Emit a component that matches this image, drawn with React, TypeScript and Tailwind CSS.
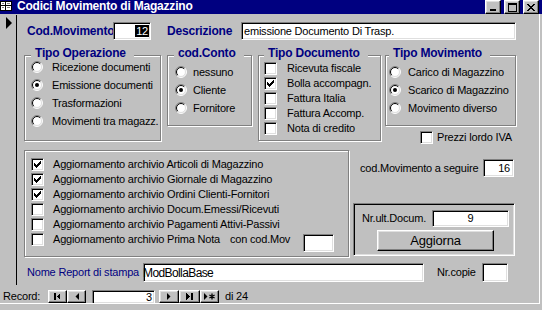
import React from "react";

const SUNKEN =
  "border border-t-[#808080] border-l-[#808080] border-b-white border-r-white shadow-[inset_1px_1px_0_#000,inset_-1px_-1px_0_#dfdfdf]";
const RAISED =
  "border border-t-white border-l-white border-b-black border-r-black shadow-[inset_-1px_-1px_0_#808080,inset_1px_1px_0_#dfdfdf]";
const ETCHED = "border border-[#808080] shadow-[inset_1px_1px_0_#fff,1px_1px_0_#fff]";

function Radio({ on }: { on?: boolean }) {
  return (
    <svg width="12" height="12" viewBox="0 0 12 12" className="shrink-0 block">
      <circle cx="6" cy="6" r="5" fill="#fff" />
      <path d="M2.111 9.889A5.5 5.5 0 0 1 9.889 2.111" fill="none" stroke="#808080" />
      <path d="M9.889 2.111A5.5 5.5 0 0 1 2.111 9.889" fill="none" stroke="#fff" />
      <path d="M2.818 9.182A4.5 4.5 0 0 1 9.182 2.818" fill="none" stroke="#000" />
      <path d="M9.182 2.818A4.5 4.5 0 0 1 2.818 9.182" fill="none" stroke="#dfdfdf" />
      {on && <circle cx="6" cy="6" r="2" fill="#000" />}
    </svg>
  );
}

function Check({ on }: { on?: boolean }) {
  return (
    <div className={`w-[13px] h-[13px] shrink-0 bg-white ${SUNKEN} flex items-center justify-center`}>
      {on && (
        <svg width="7" height="7" viewBox="0 0 7 7" shapeRendering="crispEdges" className="block">
          <path
            d="M0 2h1v3H0zM1 3h1v3H1zM2 4h1v3H2zM3 3h1v3H3zM4 2h1v3H4zM5 1h1v3H5zM6 0h1v3H6z"
            fill="#000"
          />
        </svg>
      )}
    </div>
  );
}

function Legend({ children, className }: { children: React.ReactNode; className: string }) {
  return (
    <div
      className={`-mt-[10px] self-start h-[14px] leading-[14px] pl-[4px] pr-[8px] bg-[#c0c0c0] font-bold text-[12px] text-[#000080] whitespace-nowrap ${className}`}
    >
      {children}
    </div>
  );
}

function TitleBtn({ children, className }: { children: React.ReactNode; className: string }) {
  return (
    <div className={`w-[16px] h-[14px] bg-[#c0c0c0] ${RAISED} flex items-center justify-center ${className}`}>
      {children}
    </div>
  );
}

function NavBtn({ children, className }: { children: React.ReactNode; className: string }) {
  return (
    <div className={`h-[13px] bg-[#c0c0c0] ${RAISED} flex items-center justify-center ${className}`}>
      {children}
    </div>
  );
}

function TitleBar() {
  return (
    <div className="h-[14px] bg-[#000080] flex items-start shrink-0">
      <svg width="12" height="11" viewBox="0 0 12 11" className="block mt-[1px]" shapeRendering="crispEdges">
        <rect x="0" y="0" width="12" height="10" fill="#fff" />
        <path d="M0 0h12v1H0zM0 9h12v1H0zM0 0h1v10H0zM11 0h1v10h-1zM0 4h12v1H0zM5 0h1v10H5z" fill="#000" />
        <path d="M2 2h2v1H2zM7 2h3v1H7zM2 6h2v1H2zM7 6h3v1H7z" fill="#808080" />
      </svg>
      <div className="ml-[5px] -mt-[1px] text-white font-bold text-[12px] leading-[14px] whitespace-nowrap">
        Codici Movimento di Magazzino
      </div>
      <div className="flex-1" />
      <TitleBtn className="">
        <svg width="8" height="8" viewBox="0 0 8 8" className="block" shapeRendering="crispEdges">
          <rect x="1" y="6" width="6" height="2" fill="#000" />
        </svg>
      </TitleBtn>
      <TitleBtn className="ml-[3px]">
        <svg width="9" height="9" viewBox="0 0 9 9" className="block" shapeRendering="crispEdges">
          <path d="M0 0h9v2H0zM0 0h1v9H0zM8 0h1v9H8zM0 8h9v1H0z" fill="#000" />
        </svg>
      </TitleBtn>
      <TitleBtn className="ml-[3px] mr-[3px]">
        <svg width="8" height="7" viewBox="0 0 8 7" className="block" shapeRendering="crispEdges">
          <path
            d="M0 0h2v1H0zM6 0h2v1H6zM1 1h2v1H1zM5 1h2v1H5zM2 2h4v1H2zM3 3h2v1H3zM2 4h4v1H2zM1 5h2v1H1zM5 5h2v1H5zM0 6h2v1H0zM6 6h2v1H6z"
            fill="#000"
          />
        </svg>
      </TitleBtn>
    </div>
  );
}

function Selector() {
  return (
    <div className="w-[17px] pt-[1px] pb-[3px] shrink-0">
      <div className="h-full border-r border-black pt-[2px] pl-[6px]">
        <div className="w-0 h-0 border-y-[6px] border-y-transparent border-l-[6px] border-l-black" />
      </div>
    </div>
  );
}

function Form() {
  const operazioni: [string, boolean][] = [
    ["Ricezione documenti", false],
    ["Emissione documenti", true],
    ["Trasformazioni", false],
    ["Movimenti tra magazz.", false],
  ];
  const conti: [string, boolean][] = [
    ["nessuno", false],
    ["Cliente", true],
    ["Fornitore", false],
  ];
  const documenti: [string, boolean][] = [
    ["Ricevuta fiscale", false],
    ["Bolla accompagn.", true],
    ["Fattura Italia", false],
    ["Fattura Accomp.", false],
    ["Nota di credito", false],
  ];
  const movimenti: [string, boolean][] = [
    ["Carico di Magazzino", false],
    ["Scarico di Magazzino", true],
    ["Movimento diverso", false],
  ];
  const archivi: [string, boolean][] = [
    ["Aggiornamento archivio Articoli di Magazzino", true],
    ["Aggiornamento archivio Giornale di Magazzino", true],
    ["Aggiornamento archivio Ordini Clienti-Fornitori", true],
    ["Aggiornamento archivio Docum.Emessi/Ricevuti", false],
    ["Aggiornamento archivio Pagamenti Attivi-Passivi", false],
  ];

  return (
    <div className="flex-1 flex flex-col pt-[8px]">
      {/* Row 1 */}
      <div className="flex items-center h-[18px] pl-[10px]">
        <div className="w-[86px] font-bold text-[12px] text-[#000080] whitespace-nowrap">Cod.Movimento</div>
        <div className={`w-[38px] h-[18px] bg-white ${SUNKEN} flex items-center justify-end pr-[1px]`}>
          <span className="bg-black text-white h-[12px] leading-[12px] px-[1px]">12</span>
        </div>
        <div className="ml-[16px] w-[74px] font-bold text-[12px] text-[#000080] whitespace-nowrap">Descrizione</div>
        <div className={`w-[275px] h-[18px] bg-white ${SUNKEN} flex items-center pl-[2px] whitespace-nowrap`}>
          emissione Documento Di Trasp.
        </div>
      </div>

      {/* Row 2: option groups */}
      <div className="flex items-start pl-[7px] mt-[15px]">
        <div className={`w-[137px] h-[86px] ${ETCHED} flex flex-col`}>
          <Legend className="ml-[6px]">Tipo Operazione</Legend>
          <div className="-mt-[2px] pl-[6px] flex flex-col">
            {operazioni.map(([t, on]) => (
              <div key={t} className="h-[18px] flex items-center">
                <Radio on={on} />
                <span className="ml-[9px] whitespace-nowrap">{t}</span>
              </div>
            ))}
          </div>
        </div>

        <div className={`ml-[6px] w-[85px] h-[71px] ${ETCHED} flex flex-col`}>
          <Legend className="ml-[6px]">cod.Conto</Legend>
          <div className="mt-[3px] pl-[7px] flex flex-col">
            {conti.map(([t, on]) => (
              <div key={t} className="h-[18px] flex items-center">
                <Radio on={on} />
                <span className="ml-[6px] whitespace-nowrap">{t}</span>
              </div>
            ))}
          </div>
        </div>

        <div className={`ml-[6px] w-[123px] h-[86px] ${ETCHED} flex flex-col`}>
          <Legend className="ml-[5px]">Tipo Documento</Legend>
          <div className="mt-[1px] pl-[5px] flex flex-col">
            {documenti.map(([t, on]) => (
              <div key={t} className="h-[15px] flex items-center">
                <Check on={on} />
                <span className="ml-[10px] whitespace-nowrap">{t}</span>
              </div>
            ))}
          </div>
        </div>

        <div className="ml-[4px] flex flex-col">
          <div className={`w-[131px] h-[71px] ${ETCHED} flex flex-col`}>
            <Legend className="ml-[3px]">Tipo Movimento</Legend>
            <div className="mt-[3px] pl-[3px] flex flex-col">
              {movimenti.map(([t, on]) => (
                <div key={t} className="h-[18px] flex items-center">
                  <Radio on={on} />
                  <span className="ml-[7px] whitespace-nowrap">{t}</span>
                </div>
              ))}
            </div>
          </div>
          <div className="mt-[5px] ml-[35px] h-[13px] flex items-center">
            <Check />
            <span className="ml-[4px] whitespace-nowrap">Prezzi lordo IVA</span>
          </div>
        </div>
      </div>

      {/* Row 3 */}
      <div className="flex items-start pl-[7px] mt-[6px]">
        <div className={`w-[325px] h-[107px] ${ETCHED} flex flex-col pt-[6px] pl-[6px]`}>
          {archivi.map(([t, on]) => (
            <div key={t} className="h-[15px] flex items-center">
              <Check on={on} />
              <span className="ml-[9px] whitespace-nowrap">{t}</span>
            </div>
          ))}
          <div className="h-[15px] flex items-center">
            <Check />
            <span className="ml-[9px] w-[177px] whitespace-nowrap">Aggiornamento archivio Prima Nota</span>
            <span className="w-[73px] whitespace-nowrap">con cod.Mov</span>
            <div className={`self-start mt-[2px] w-[31px] h-[18px] shrink-0 bg-white ${SUNKEN}`} />
          </div>
        </div>

        <div className="flex flex-col">
          <div className="mt-[9px] h-[18px] flex items-center pl-[11px]">
            <span className="w-[123px] whitespace-nowrap">cod.Movimento a seguire</span>
            <div className={`w-[31px] h-[18px] bg-white ${SUNKEN} flex items-center justify-end pr-[3px]`}>16</div>
          </div>
          <div className={`mt-[26px] ml-[4px] w-[162px] h-[53px] ${SUNKEN} flex flex-col`}>
            <div className="mt-[6px] h-[17px] flex items-center pl-[8px]">
              <span className="w-[70px] whitespace-nowrap">Nr.ult.Docum.</span>
              <div className={`w-[77px] h-[17px] bg-white ${SUNKEN} flex items-center justify-center`}>9</div>
            </div>
            <div
              className={`mt-[3px] ml-[23px] w-[117px] h-[21px] bg-[#c0c0c0] ${RAISED} flex items-center justify-center text-[13px]`}
            >
              Aggiorna
            </div>
          </div>
        </div>
      </div>

      {/* Row 4 */}
      <div className="flex items-center h-[19px] pl-[10px] mt-[6px]">
        <div className="w-[116px] text-[#000080] whitespace-nowrap">Nome Report di stampa</div>
        <div className={`w-[281px] h-[19px] bg-white ${SUNKEN} flex items-center`}>
          <span className="text-[12px] tracking-[-0.6px] -ml-[1px] whitespace-nowrap">ModBollaBase</span>
        </div>
        <div className="ml-[13px] w-[45px] whitespace-nowrap">Nr.copie</div>
        <div className={`w-[26px] h-[19px] bg-white ${SUNKEN}`} />
      </div>
    </div>
  );
}

function RecordBar() {
  return (
    <div className="h-[15px] flex items-start pt-[2px] pl-[3px] shrink-0">
      <div className="w-[45px] h-[13px] flex items-center whitespace-nowrap">Record:</div>
      <NavBtn className="w-[19px]">
        <svg width="7" height="7" viewBox="0 0 7 7" className="block" shapeRendering="crispEdges">
          <rect x="0" y="0" width="2" height="7" fill="#000" />
          <path d="M6 0v7L2.5 3.5z" fill="#000" />
        </svg>
      </NavBtn>
      <NavBtn className="w-[19px]">
        <svg width="4" height="7" viewBox="0 0 4 7" className="block">
          <path d="M4 0v7L0.5 3.5z" fill="#000" />
        </svg>
      </NavBtn>
      <div className={`ml-[6px] w-[63px] h-[14px] bg-white ${SUNKEN} flex items-center justify-end pr-[2px]`}>3</div>
      <NavBtn className="ml-[4px] w-[20px]">
        <svg width="4" height="7" viewBox="0 0 4 7" className="block">
          <path d="M0 0v7L3.5 3.5z" fill="#000" />
        </svg>
      </NavBtn>
      <NavBtn className="w-[21px]">
        <svg width="7" height="7" viewBox="0 0 7 7" className="block" shapeRendering="crispEdges">
          <path d="M0 0v7L3.5 3.5z" fill="#000" />
          <rect x="5" y="0" width="2" height="7" fill="#000" />
        </svg>
      </NavBtn>
      <NavBtn className="w-[19px]">
        <svg width="11" height="7" viewBox="0 0 11 7" className="block">
          <path d="M0 0v7L3.5 3.5z" fill="#000" />
          <path d="M8 0.5v6M5.4 2l5.2 3M5.4 5l5.2-3" stroke="#000" strokeWidth="1.3" fill="none" />
        </svg>
      </NavBtn>
      <div className="ml-[6px] h-[13px] flex items-center whitespace-nowrap">di 24</div>
    </div>
  );
}

export default function App() {
  return (
    <div className="w-[542px] h-[310px] overflow-hidden bg-[#c0c0c0] flex flex-col font-['Liberation_Sans',Arial,sans-serif] text-[11px] tracking-[-0.2px] text-black leading-none">
      <TitleBar />
      <div className="flex h-[289px] shrink-0">
        <div className="w-[539px] flex flex-col shrink-0">
          <div className="flex h-[274px] shrink-0">
            <Selector />
            <Form />
          </div>
          <RecordBar />
        </div>
        <div className="w-[1px] bg-white shrink-0" />
      </div>
      <div className="h-[1px] w-[540px] bg-white shrink-0" />
    </div>
  );
}
